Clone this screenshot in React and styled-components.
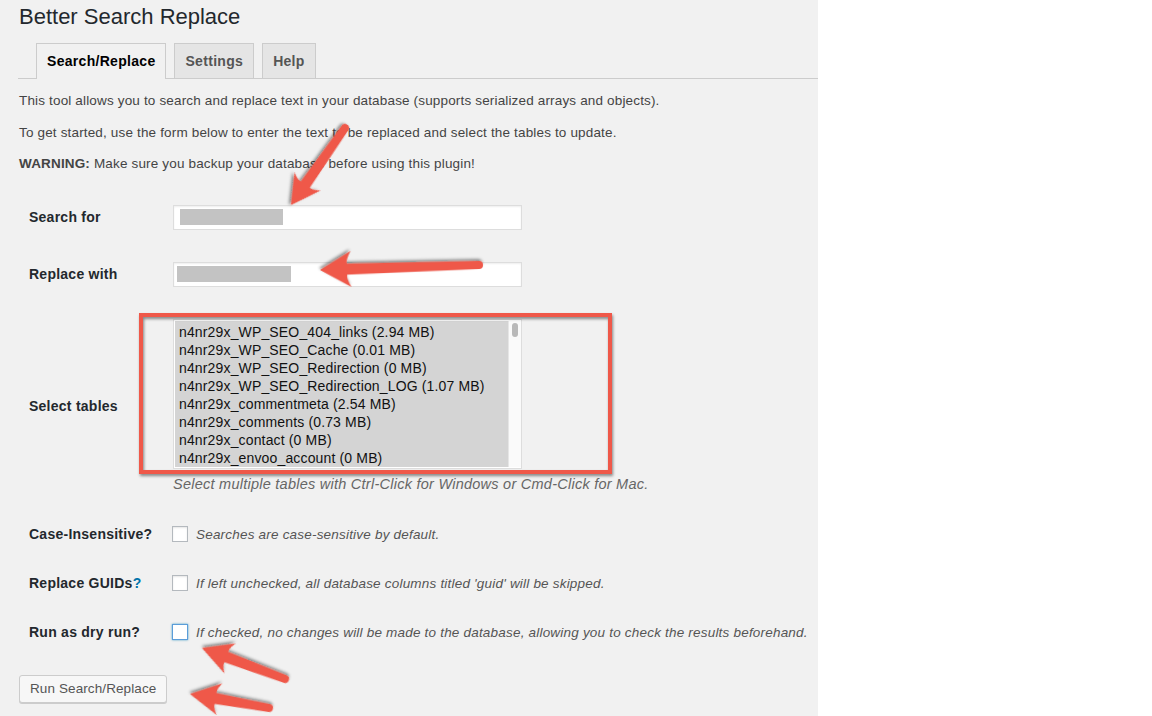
import React from 'react';
import styled, { createGlobalStyle } from 'styled-components';

const GlobalStyle = createGlobalStyle`
  html, body {
    margin: 0;
    padding: 0;
    background: #ffffff;
  }
  body {
    font-family: "Liberation Sans", Arial, sans-serif;
    color: #444;
  }
`;

const Page = styled.div`
  position: relative;
  display: flex;
  width: 1152px;
  height: 716px;
  overflow: hidden;
`;

const Panel = styled.div`
  width: 818px;
  height: 716px;
  background: #f1f1f1;
  padding-left: 19px;
  box-sizing: border-box;
`;

const Title = styled.h1`
  margin: 0;
  padding-top: 2px;
  font-size: 22px;
  line-height: 29px;
  font-weight: 400;
  color: #23282d;
`;

const TabNav = styled.div`
  display: flex;
  align-items: flex-end;
  gap: 8px;
  margin: 12px 0 0 -1px;
  padding-left: 18px;
  border-bottom: 1px solid #ccc;
`;

const Tab = styled.div`
  height: ${(p) => (p.active ? '35px' : '34px')};
  line-height: 34px;
  padding: 0 10px;
  margin-bottom: ${(p) => (p.active ? '-1px' : '0')};
  border: 1px solid #ccc;
  border-bottom: none;
  background: ${(p) => (p.active ? '#f1f1f1' : '#e5e5e5')};
  color: ${(p) => (p.active ? '#000' : '#555')};
  font-size: 14px;
  font-weight: 700;
  letter-spacing: 0.3px;
`;

const Intro = styled.p`
  margin: 12px 0 0;
  font-size: 13.5px;
  letter-spacing: 0.16px;
  line-height: 19.5px;
  color: #444;
`;

const Form = styled.div`
  margin-top: 15px;
  padding-left: 10px;
`;

const Row = styled.div`
  display: grid;
  grid-template-columns: 144px 1fr;
  align-items: center;
  padding: 16px 0;
`;

const Label = styled.div`
  font-size: 14px;
  font-weight: 700;
  letter-spacing: 0.25px;
  color: #23282d;
`;

const Help = styled.span`
  color: #0073aa;
`;

const TextField = styled.div`
  display: flex;
  align-items: center;
  width: 349px;
  height: 25px;
  box-sizing: border-box;
  padding-left: ${(p) => p.inset}px;
  border: 1px solid #ddd;
  background: #fff;
  box-shadow: inset 0 1px 2px rgba(0, 0, 0, 0.07);
`;

const Redacted = styled.span`
  display: block;
  width: ${(p) => p.width}px;
  height: 16px;
  background: #c3c3c3;
`;

const SelectBox = styled.div`
  display: flex;
  width: 349px;
  height: 150px;
  box-sizing: border-box;
  border: 1px solid #ddd;
  background: #fff;
  padding: 1px 0 1px 1px;
`;

const OptionList = styled.div`
  flex: 1;
  background: #d4d4d4;
  padding-top: 2px;
  overflow: hidden;
`;

const Option = styled.div`
  padding-left: 4px;
  font-size: 14px;
  letter-spacing: 0.15px;
  line-height: 18px;
  color: #111;
  white-space: nowrap;
`;

const ScrollTrack = styled.div`
  width: 12px;
  background: #fafafa;
  border-left: 1px solid #e6e6e6;
  display: flex;
  justify-content: center;
  padding-top: 2px;
`;

const ScrollThumb = styled.div`
  width: 6px;
  height: 14px;
  border-radius: 3px;
  background: #b9b9b9;
`;

const Note = styled.div`
  margin-top: 6px;
  font-size: 14.5px;
  letter-spacing: 0.25px;
  line-height: 19px;
  font-style: italic;
  color: #666;
  white-space: nowrap;
`;

const CheckLine = styled.div`
  display: flex;
  align-items: center;
  gap: 8px;
  height: 17px;
  margin-left: -1px;
`;

const Checkbox = styled.span`
  width: 16px;
  height: 16px;
  box-sizing: border-box;
  background: #fff;
  border: 1px solid ${(p) => (p.focused ? '#5b9dd9' : '#b4b9be')};
  box-shadow: ${(p) =>
    p.focused ? '0 0 2px rgba(30, 140, 190, 0.8)' : 'inset 0 1px 2px rgba(0, 0, 0, 0.1)'};
`;

const Description = styled.span`
  font-size: 13.5px;
  letter-spacing: 0.2px;
  font-style: italic;
  color: #555;
  white-space: nowrap;
`;

const Button = styled.button`
  margin-top: 18px;
  height: 28px;
  padding: 0 10px 1px;
  border: 1px solid #ccc;
  border-radius: 3px;
  background: #f7f7f7;
  box-shadow: 0 1px 0 #ccc;
  font-family: "Liberation Sans", Arial, sans-serif;
  font-size: 13.5px;
  letter-spacing: 0.1px;
  color: #555;
`;

const Annotations = styled.svg`
  position: absolute;
  left: 0;
  top: 0;
  pointer-events: none;
`;

const RED = '#ef5849';

// arrow pointing along +x, tip at origin
const arrowPath = (len, hl = 31, hw = 17) =>
  `M0,0 L${-hl},${-hw} Q${-hl + 5},${-9} ${-hl + 4},${-5.5} L${-len},-4 ` +
  `A4,4 0 0 0 ${-len},4 L${-hl + 4},5.5 Q${-hl + 5},9 ${-hl},${hw} Z`;

const arrows = [
  { tail: [345, 128], tip: [291, 205], hl: 29, hw: 16 },
  { tail: [479, 265], tip: [320, 270], hl: 31, hw: 18 },
  { tail: [285, 679], tip: [202, 648], hl: 30, hw: 16 },
  { tail: [269, 708], tip: [190, 694], hl: 30, hw: 16 },
];

const tables = [
  'n4nr29x_WP_SEO_404_links (2.94 MB)',
  'n4nr29x_WP_SEO_Cache (0.01 MB)',
  'n4nr29x_WP_SEO_Redirection (0 MB)',
  'n4nr29x_WP_SEO_Redirection_LOG (1.07 MB)',
  'n4nr29x_commentmeta (2.54 MB)',
  'n4nr29x_comments (0.73 MB)',
  'n4nr29x_contact (0 MB)',
  'n4nr29x_envoo_account (0 MB)',
];

const checks = [
  { label: 'Case-Insensitive?', text: 'Searches are case-sensitive by default.' },
  { label: 'Replace GUIDs', help: true, text: "If left unchecked, all database columns titled 'guid' will be skipped." },
  {
    label: 'Run as dry run?',
    focused: true,
    text: 'If checked, no changes will be made to the database, allowing you to check the results beforehand.',
  },
];

export default function App() {
  return (
    <Page>
      <GlobalStyle />
      <Panel>
        <Title>Better Search Replace</Title>
        <TabNav>
          <Tab active>Search/Replace</Tab>
          <Tab>Settings</Tab>
          <Tab>Help</Tab>
        </TabNav>

        <Intro>This tool allows you to search and replace text in your database (supports serialized arrays and objects).</Intro>
        <Intro>To get started, use the form below to enter the text to be replaced and select the tables to update.</Intro>
        <Intro><strong>WARNING:</strong> Make sure you backup your database before using this plugin!</Intro>

        <Form>
          <Row>
            <Label>Search for</Label>
            <TextField inset={6}><Redacted width={103} /></TextField>
          </Row>
          <Row>
            <Label>Replace with</Label>
            <TextField inset={3}><Redacted width={114} /></TextField>
          </Row>
          <Row>
            <Label>Select tables</Label>
            <div>
              <SelectBox>
                <OptionList>
                  {tables.map((t) => (
                    <Option key={t}>{t}</Option>
                  ))}
                </OptionList>
                <ScrollTrack><ScrollThumb /></ScrollTrack>
              </SelectBox>
              <Note>Select multiple tables with Ctrl-Click for Windows or Cmd-Click for Mac.</Note>
            </div>
          </Row>
          {checks.map((c) => (
            <Row key={c.label}>
              <Label>
                {c.label}
                {c.help && <Help>?</Help>}
              </Label>
              <CheckLine>
                <Checkbox focused={c.focused} />
                <Description>{c.text}</Description>
              </CheckLine>
            </Row>
          ))}
        </Form>

        <Button>Run Search/Replace</Button>
      </Panel>

      <Annotations width="1152" height="716" viewBox="0 0 1152 716">
        <defs>
          <filter id="shade" x="-20%" y="-20%" width="140%" height="140%">
            <feDropShadow dx="1" dy="2" stdDeviation="1.5" floodColor="#000" floodOpacity="0.45" />
          </filter>
        </defs>
        <rect x="141" y="315" width="469" height="157" fill="none" stroke={RED} strokeWidth="4" filter="url(#shade)" />
        {arrows.map((a, i) => {
          const dx = a.tip[0] - a.tail[0];
          const dy = a.tip[1] - a.tail[1];
          const len = Math.hypot(dx, dy);
          const angle = (Math.atan2(dy, dx) * 180) / Math.PI;
          return (
            <path
              key={i}
              d={arrowPath(len, a.hl, a.hw)}
              fill={RED}
              filter="url(#shade)"
              transform={`translate(${a.tip[0]} ${a.tip[1]}) rotate(${angle})`}
            />
          );
        })}
      </Annotations>
    </Page>
  );
}
